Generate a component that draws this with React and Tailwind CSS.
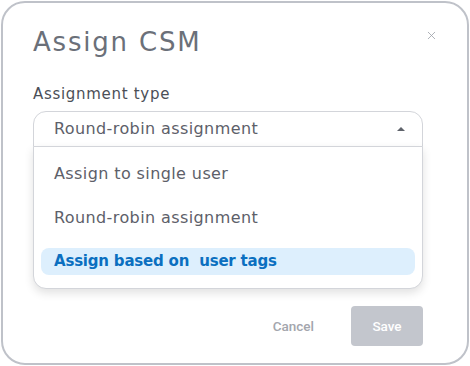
import { X } from 'lucide-react'

const options = ['Assign to single user', 'Round-robin assignment', 'Assign based on  user tags']

export default function App() {
  const selected = 2

  return (
    <div className="w-[470px] h-[366px] bg-white p-px" style={{ fontFamily: '"DejaVu Sans", sans-serif' }}>
      <div className="h-full border-2 border-[#bfc2c9] rounded-[24px] bg-white flex flex-col pl-[30px] pr-[44px] pt-[19px] pb-[17px]">
        {/* Header */}
        <div className="flex items-start justify-between">
          <h2 className="text-[26px] leading-[40px] text-[#6b7079] tracking-[1.8px]">Assign CSM</h2>
          <button className="mt-[7px] mr-[-15px] text-[#9ca0a8]">
            <X size={13} strokeWidth={1.5} />
          </button>
        </div>

        {/* Field */}
        <label className="mt-[21px] text-[15px] leading-[22px] text-[#4b4f57] tracking-[0.7px]">Assignment type</label>
        <div className="mt-[6px] relative">
          <div className="h-[36px] border border-[#d3d5da] rounded-t-[13px] flex items-center justify-between pl-[20px] pr-[17px]">
            <span className="text-[16px] text-[#5d6069] tracking-[0.4px]">Round-robin assignment</span>
            <span className="w-0 h-0 border-l-[4px] border-r-[4px] border-b-[4px] border-l-transparent border-r-transparent border-b-[#5f636b]" />
          </div>
          <div className="absolute left-0 right-0 top-[35px] bg-white border border-[#d3d5da] rounded-b-[13px] shadow-[0_4px_10px_rgba(0,0,0,0.12)] px-[7px] pt-[13px] pb-[13px]">
            {options.map((o, i) => (
              <div
                key={o}
                className={`h-[27px] rounded-[8px] flex items-center pl-[13px] whitespace-pre ${i === 0 ? '' : 'mt-[17px]'} ${i === selected ? 'bg-[#ddeffd] text-[#0b6fc0] font-bold text-[15px] tracking-[-0.2px]' : 'text-[#5d6069] text-[16px] tracking-[0.4px]'}`}
              >
                {o}
              </div>
            ))}
          </div>
        </div>

        {/* Footer */}
        <div className="mt-auto flex items-center justify-end gap-[37px]">
          <button className="text-[13.5px] font-medium text-[#a3a6ad]" style={{ fontFamily: 'Roboto, sans-serif' }}>Cancel</button>
          <button className="w-[72px] h-[40px] rounded-[4px] bg-[#c3c6cd] text-white text-[13.5px] font-medium" style={{ fontFamily: 'Roboto, sans-serif' }}>Save</button>
        </div>
      </div>
    </div>
  )
}
